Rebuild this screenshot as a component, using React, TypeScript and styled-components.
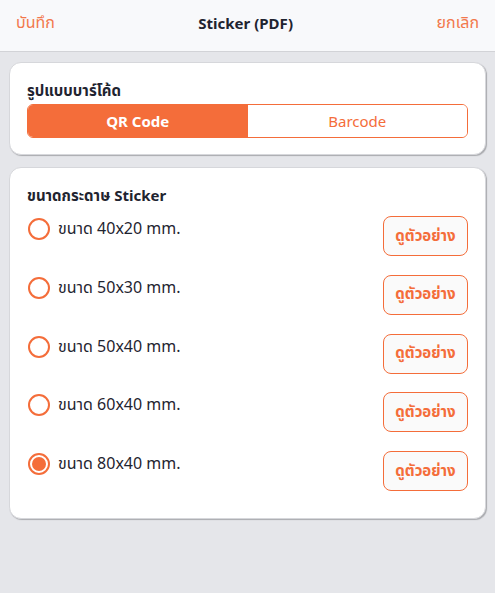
import React, { useState } from "react";
import styled, { createGlobalStyle } from "styled-components";

const Global = createGlobalStyle`
  html, body { margin: 0; padding: 0; background: #e5e6ea; }
  body { font-family: "Noto Sans", "Noto Sans Thai", "DejaVu Sans", sans-serif; }
  * { box-sizing: border-box; }
`;

const ORANGE = "#f46d3a";

const Page = styled.div`
  width: 495px;
  min-height: 593px;
  background: #e5e6ea;
`;

const Header = styled.header`
  height: 52px;
  background: #f8f9fb;
  border-bottom: 1px solid #d2d3d7;
  display: flex;
  align-items: center;
  justify-content: space-between;
  padding: 0 16px 6px 16px;
`;

const HeaderAction = styled.button`
  border: none;
  background: none;
  padding: 0;
  color: #f2784c;
  font-family: inherit;
  font-size: 16px;
  cursor: pointer;
`;

const HeaderTitle = styled.h1`
  margin: 0;
  font-size: 15px;
  font-weight: 700;
  color: #1f2430;
`;

const Content = styled.main`
  display: flex;
  flex-direction: column;
  gap: 12px;
  padding: 10px 9px;
`;

const Card = styled.section<{ $pb: number }>`
  background: #fff;
  border-radius: 12px;
  border: 1px solid #d6d7db;
  box-shadow: 1px 1px 1px #a9aaae;
  padding: 16px 17px ${(p) => p.$pb}px 17px;
`;

const CardTitle = styled.h2`
  margin: 0 0 3px 0;
  font-size: 15px;
  font-weight: 700;
  color: #1f2430;
  line-height: 22px;
`;

const Segmented = styled.div`
  display: grid;
  grid-template-columns: 1fr 1fr;
  height: 34px;
  border: 1px solid ${ORANGE};
  border-radius: 6px;
  overflow: hidden;
`;

const Segment = styled.button<{ $active: boolean }>`
  border: none;
  margin: 0;
  font-family: inherit;
  font-size: 15px;
  font-weight: ${(p) => (p.$active ? 700 : 400)};
  background: ${(p) => (p.$active ? ORANGE : "#fff")};
  color: ${(p) => (p.$active ? "#fff" : ORANGE)};
  cursor: pointer;
`;

const List = styled.div`
  display: flex;
  flex-direction: column;
  gap: 18.75px;
  margin-top: 10px;
`;

const Row = styled.div`
  display: flex;
  align-items: flex-start;
  justify-content: space-between;
`;

const Option = styled.label`
  display: flex;
  align-items: center;
  gap: 8px;
  margin-top: 1px;
  margin-left: 1px;
  cursor: pointer;
  font-size: 16px;
  color: #1f2430;
`;

const Radio = styled.span<{ $checked: boolean }>`
  width: 22px;
  height: 22px;
  border-radius: 50%;
  border: 2px solid ${ORANGE};
  display: flex;
  align-items: center;
  justify-content: center;
  &::after {
    content: "";
    width: 14px;
    height: 14px;
    border-radius: 50%;
    background: ${(p) => (p.$checked ? ORANGE : "transparent")};
  }
`;

const PreviewButton = styled.button`
  width: 85px;
  height: 40px;
  border: 1px solid ${ORANGE};
  border-radius: 8px;
  background: #fafafa;
  color: ${ORANGE};
  font-family: inherit;
  font-size: 15px;
  font-weight: 700;
  cursor: pointer;
  padding: 0;
`;

const sizes = ["40x20", "50x30", "50x40", "60x40", "80x40"];

export default function App() {
  const [mode, setMode] = useState<"qr" | "bar">("qr");
  const [size, setSize] = useState("80x40");
  return (
    <Page>
      <Global />
      <Header>
        <HeaderAction>บันทึก</HeaderAction>
        <HeaderTitle>Sticker (PDF)</HeaderTitle>
        <HeaderAction>ยกเลิก</HeaderAction>
      </Header>
      <Content>
        <Card $pb={16}>
          <CardTitle>รูปแบบบาร์โค้ด</CardTitle>
          <Segmented>
            <Segment $active={mode === "qr"} onClick={() => setMode("qr")}>
              QR Code
            </Segment>
            <Segment $active={mode === "bar"} onClick={() => setMode("bar")}>
              Barcode
            </Segment>
          </Segmented>
        </Card>
        <Card $pb={27}>
          <CardTitle>ขนาดกระดาษ Sticker</CardTitle>
          <List>
            {sizes.map((s) => (
              <Row key={s}>
                <Option onClick={() => setSize(s)}>
                  <Radio $checked={size === s} />
                  ขนาด {s} mm.
                </Option>
                <PreviewButton>ดูตัวอย่าง</PreviewButton>
              </Row>
            ))}
          </List>
        </Card>
      </Content>
    </Page>
  );
}
